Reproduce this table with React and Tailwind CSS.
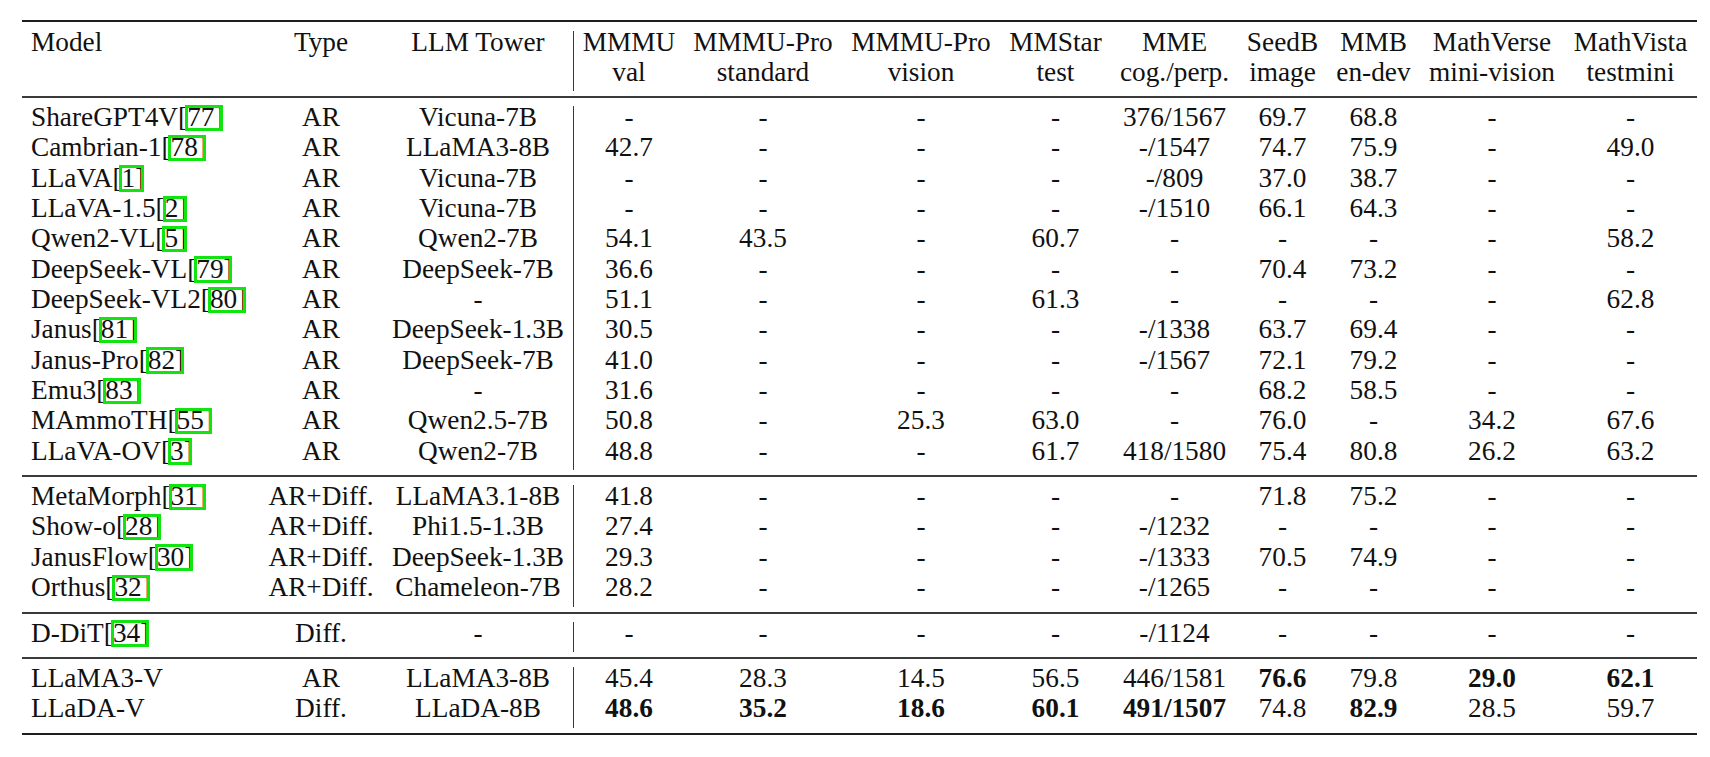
import React from "react";

// 12 columns, widths taken from the reference (LaTeX table, booktabs rules)
const COLS =
  "grid grid-cols-[237px_124px_190px_111px_158px_158px_111px_127px_89px_93px_144px_133px]";

const header = [
  ["Model", "Type", "LLM Tower", "MMMU", "MMMU-Pro", "MMMU-Pro", "MMStar", "MME", "SeedB", "MMB", "MathVerse", "MathVista"],
  ["", "", "", "val", "standard", "vision", "test", "cog./perp.", "image", "en-dev", "mini-vision", "testmini"],
];

const groups = [
  [
    [["ShareGPT4V", "77"], "AR", "Vicuna-7B", "-", "-", "-", "-", "376/1567", "69.7", "68.8", "-", "-"],
    [["Cambrian-1", "78"], "AR", "LLaMA3-8B", "42.7", "-", "-", "-", "-/1547", "74.7", "75.9", "-", "49.0"],
    [["LLaVA", "1"], "AR", "Vicuna-7B", "-", "-", "-", "-", "-/809", "37.0", "38.7", "-", "-"],
    [["LLaVA-1.5", "2"], "AR", "Vicuna-7B", "-", "-", "-", "-", "-/1510", "66.1", "64.3", "-", "-"],
    [["Qwen2-VL", "5"], "AR", "Qwen2-7B", "54.1", "43.5", "-", "60.7", "-", "-", "-", "-", "58.2"],
    [["DeepSeek-VL", "79"], "AR", "DeepSeek-7B", "36.6", "-", "-", "-", "-", "70.4", "73.2", "-", "-"],
    [["DeepSeek-VL2", "80"], "AR", "-", "51.1", "-", "-", "61.3", "-", "-", "-", "-", "62.8"],
    [["Janus", "81"], "AR", "DeepSeek-1.3B", "30.5", "-", "-", "-", "-/1338", "63.7", "69.4", "-", "-"],
    [["Janus-Pro", "82"], "AR", "DeepSeek-7B", "41.0", "-", "-", "-", "-/1567", "72.1", "79.2", "-", "-"],
    [["Emu3", "83"], "AR", "-", "31.6", "-", "-", "-", "-", "68.2", "58.5", "-", "-"],
    [["MAmmoTH", "55"], "AR", "Qwen2.5-7B", "50.8", "-", "25.3", "63.0", "-", "76.0", "-", "34.2", "67.6"],
    [["LLaVA-OV", "3"], "AR", "Qwen2-7B", "48.8", "-", "-", "61.7", "418/1580", "75.4", "80.8", "26.2", "63.2"],
  ],
  [
    [["MetaMorph", "31"], "AR+Diff.", "LLaMA3.1-8B", "41.8", "-", "-", "-", "-", "71.8", "75.2", "-", "-"],
    [["Show-o", "28"], "AR+Diff.", "Phi1.5-1.3B", "27.4", "-", "-", "-", "-/1232", "-", "-", "-", "-"],
    [["JanusFlow", "30"], "AR+Diff.", "DeepSeek-1.3B", "29.3", "-", "-", "-", "-/1333", "70.5", "74.9", "-", "-"],
    [["Orthus", "32"], "AR+Diff.", "Chameleon-7B", "28.2", "-", "-", "-", "-/1265", "-", "-", "-", "-"],
  ],
  [
    [["D-DiT", "34"], "Diff.", "-", "-", "-", "-", "-", "-/1124", "-", "-", "-", "-"],
  ],
  [
    ["LLaMA3-V", "AR", "LLaMA3-8B", "45.4", "28.3", "14.5", "56.5", "446/1581", { b: "76.6" }, "79.8", { b: "29.0" }, { b: "62.1" }],
    ["LLaDA-V", "Diff.", "LLaDA-8B", { b: "48.6" }, { b: "35.2" }, { b: "18.6" }, { b: "60.1" }, { b: "491/1507" }, "74.8", { b: "82.9" }, "28.5", "59.7"],
  ],
];

const Cite = ({ n }) => (
  <span className="relative">
    {n}
    <span className="absolute top-[2.5px] bottom-[1px] -left-[2px] -right-[8.5px] border-[3px] border-[#12e412]" />
  </span>
);

const Cell = ({ value, index }) => {
  let content = value;
  let bold = false;
  if (Array.isArray(value)) {
    content = (
      <>
        {value[0]}[<Cite n={value[1]} />]
      </>
    );
  } else if (value && typeof value === "object") {
    content = value.b;
    bold = true;
  }

  let cls = "whitespace-nowrap text-center";
  if (index === 0) cls = "whitespace-nowrap text-left pl-[9px]";
  if (index === 3) cls += " border-l border-[#3a3a3a]";
  if (bold) cls += " font-bold";

  return <div className={cls}>{content}</div>;
};

const Row = ({ cells, head }) => (
  <div className={`${COLS} leading-[23px] ${head ? "h-[30px]" : "h-[30.35px]"}`}>
    {cells.map((c, i) => (
      <Cell key={i} value={c} index={i} />
    ))}
  </div>
);

export default function App() {
  return (
    <div className="min-h-[757px] bg-white pt-5 pl-[22px]">
      <div className="w-[1675px] [font-family:'Liberation_Serif','Times_New_Roman',serif] text-[27.3px] text-[#111]">
        {/* top rule */}
        <div className="h-[2px] bg-[#1e1e1e]" />

        {/* HEADER */}
        <div className="pt-[9px] pb-[5px]">
          {header.map((r, i) => (
            <Row key={i} cells={r} head />
          ))}
        </div>

        {groups.map((g, gi) => (
          <div key={gi}>
            <div className="h-[2px] bg-[#3a3a3a]" />
            <div className="pt-[8px] pb-[5px]">
              {g.map((r, ri) => (
                <Row key={ri} cells={r} />
              ))}
            </div>
          </div>
        ))}

        {/* bottom rule */}
        <div className="h-[2px] bg-[#1e1e1e]" />
      </div>
    </div>
  );
}
